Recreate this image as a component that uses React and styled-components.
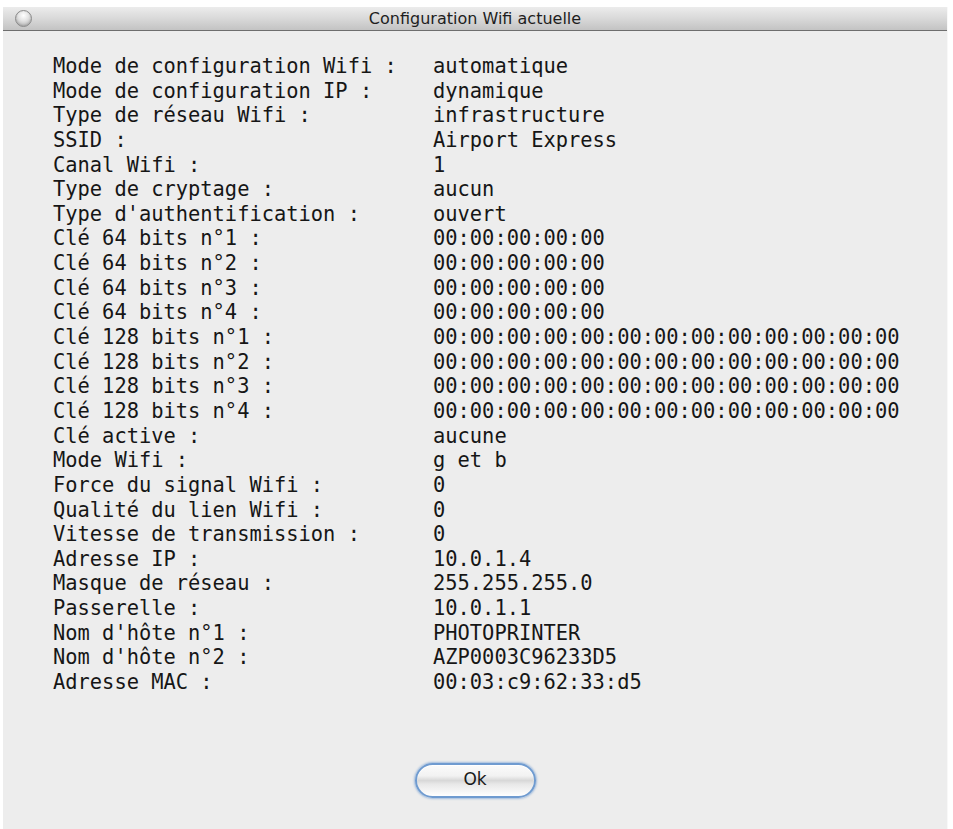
import React from 'react';
import styled, { createGlobalStyle } from 'styled-components';

const GlobalStyle = createGlobalStyle`
  html, body {
    margin: 0;
    padding: 0;
    background: #ffffff;
  }
`;

const Window = styled.div`
  margin: 7px 5px 0 3px;
  width: 945px;
  height: 822px;
  background: #ededed;
  display: flex;
  flex-direction: column;
  box-sizing: border-box;
  border-right: 1px solid #f8f8f8;
`;

const TitleBar = styled.div`
  height: 23px;
  display: grid;
  grid-template-columns: 40px 1fr 40px;
  align-items: center;
  background: linear-gradient(#ececec, #d9d9d9 50%, #c3c3c3);
  border-bottom: 1px solid #6e6e6e;
  flex-shrink: 0;
`;

const CloseButton = styled.span`
  justify-self: start;
  margin-left: 12px;
  width: 15px;
  height: 15px;
  border-radius: 50%;
  border: 1px solid #8a8a8a;
  background: radial-gradient(circle at 50% 30%, #ffffff 0%, #e4e4e4 40%, #a9a9a9 100%);
  box-shadow: inset 0 -1px 2px rgba(0, 0, 0, 0.15);
`;

const Title = styled.span`
  text-align: center;
  font-family: "DejaVu Sans", "Liberation Sans", sans-serif;
  font-size: 16px;
  color: #1e1e1e;
`;

const Content = styled.div`
  flex: 1;
  display: flex;
  flex-direction: column;
  padding: 23px 0 0 50px;
`;

const InfoTable = styled.dl`
  margin: 0;
  display: grid;
  grid-template-columns: 380px auto;
  font-family: "DejaVu Sans Mono", "Liberation Mono", monospace;
  font-size: 20.4px;
  line-height: 24.64px;
  color: #161616;
  white-space: pre;
`;

const Label = styled.dt`
  margin: 0;
`;

const Value = styled.dd`
  margin: 0;
`;

const Footer = styled.div`
  display: flex;
  justify-content: center;
  margin-top: 68px;
  padding-right: 50px;
`;

const OkButton = styled.button`
  width: 121px;
  height: 35px;
  border-radius: 18px;
  border: 2px solid #6f9bd0;
  box-shadow: 0 0 2px 1px rgba(110, 155, 210, 0.6), inset 0 1px 1px #ffffff;
  background: linear-gradient(#fbfbfb 0%, #f2f2f2 35%, #d8d8d8 50%, #e8e8e8 62%, #ffffff 100%);
  font-family: "DejaVu Sans", "Liberation Sans", sans-serif;
  font-size: 17px;
  color: #1a1a1a;
  padding: 0 0 2px;
`;

const rows = [
  ['Mode de configuration Wifi :', 'automatique'],
  ['Mode de configuration IP :', 'dynamique'],
  ['Type de réseau Wifi :', 'infrastructure'],
  ['SSID :', 'Airport Express'],
  ['Canal Wifi :', '1'],
  ['Type de cryptage :', 'aucun'],
  ["Type d'authentification :", 'ouvert'],
  ['Clé 64 bits n°1 :', '00:00:00:00:00'],
  ['Clé 64 bits n°2 :', '00:00:00:00:00'],
  ['Clé 64 bits n°3 :', '00:00:00:00:00'],
  ['Clé 64 bits n°4 :', '00:00:00:00:00'],
  ['Clé 128 bits n°1 :', '00:00:00:00:00:00:00:00:00:00:00:00:00'],
  ['Clé 128 bits n°2 :', '00:00:00:00:00:00:00:00:00:00:00:00:00'],
  ['Clé 128 bits n°3 :', '00:00:00:00:00:00:00:00:00:00:00:00:00'],
  ['Clé 128 bits n°4 :', '00:00:00:00:00:00:00:00:00:00:00:00:00'],
  ['Clé active :', 'aucune'],
  ['Mode Wifi :', 'g et b'],
  ['Force du signal Wifi :', '0'],
  ['Qualité du lien Wifi :', '0'],
  ['Vitesse de transmission :', '0'],
  ['Adresse IP :', '10.0.1.4'],
  ['Masque de réseau :', '255.255.255.0'],
  ['Passerelle :', '10.0.1.1'],
  ["Nom d'hôte n°1 :", 'PHOTOPRINTER'],
  ["Nom d'hôte n°2 :", 'AZP0003C96233D5'],
  ['Adresse MAC :', '00:03:c9:62:33:d5'],
];

const App = () => {
  return (
    <>
      <GlobalStyle />
      <Window>
        <TitleBar>
          <CloseButton />
          <Title>Configuration Wifi actuelle</Title>
        </TitleBar>
        <Content>
          <InfoTable>
            {rows.map(([label, value]) => (
              <React.Fragment key={label}>
                <Label>{label}</Label>
                <Value>{value}</Value>
              </React.Fragment>
            ))}
          </InfoTable>
          <Footer>
            <OkButton>Ok</OkButton>
          </Footer>
        </Content>
      </Window>
    </>
  );
};

export default App;
